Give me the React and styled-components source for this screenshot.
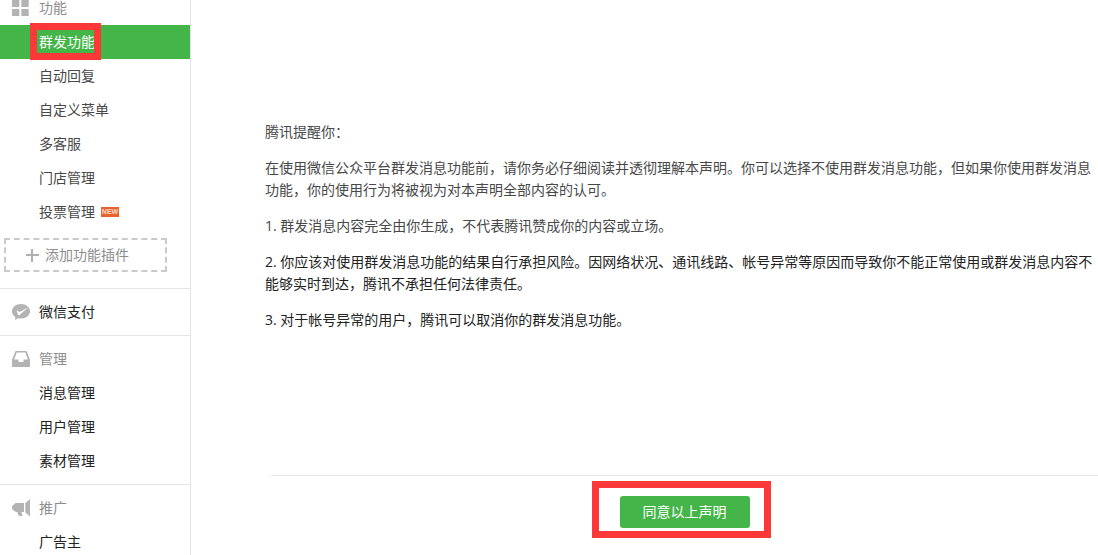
import React from "react";
import styled, { createGlobalStyle } from "styled-components";

const GlobalStyle = createGlobalStyle`
  * { box-sizing: border-box; }
  body {
    margin: 0;
    background: #fff;
    color: #222;
    font-family: "Open Sans", "Noto Sans CJK SC", sans-serif;
    font-size: 14px;
    line-height: 22px;
  }
`;

const Page = styled.div`
  display: flex;
  height: 100vh;
  overflow: hidden;
`;

const Sidebar = styled.nav`
  flex: 0 0 191px;
  border-right: 1px solid #e4e4e6;
`;

const GroupTitle = styled.h2`
  display: flex;
  align-items: center;
  gap: 9px;
  height: 34px;
  margin: 0;
  padding-left: 12px;
  font-size: 14px;
  font-weight: 400;
  color: #8d8d8d;
`;

const Group = styled.section`
  padding: 6px 0;
  & + & { border-top: 1px solid #e4e4e6; }
  &:first-child {
    padding: 0 0 16px;
  }
  &:first-child ${GroupTitle} {
    height: 16px;
    margin-bottom: 9px;
    line-height: 16px;
  }
`;

const TitleLink = styled.a`
  color: #222;
  text-decoration: none;
`;

const IconBox = styled.svg`
  flex: none;
  width: 18px;
  height: 18px;
  fill: #b3b3b3;
`;

const Menu = styled.ul`
  margin: 0;
  padding: 0;
  list-style: none;
`;

const MenuLink = styled.a`
  display: flex;
  align-items: center;
  gap: 6px;
  height: 34px;
  padding-left: 39px;
  text-decoration: none;
  color: ${(p) => (p.$active ? "#fff" : p.$soft ? "#484848" : "#222")};
  background: ${(p) => (p.$active ? "#44b549" : "transparent")};
`;

const Highlight = styled.span`
  position: relative;
  &::after {
    content: "";
    position: absolute;
    inset: ${(p) => p.$inset};
    border: 7px solid #fc3838;
    pointer-events: none;
  }
`;

const NewBadge = styled.span`
  display: flex;
  align-items: center;
  justify-content: center;
  width: 18px;
  height: 10px;
  background: #e8602c;
  color: #fbdccb;
  font: 700 7px/10px "Liberation Sans", sans-serif;
`;

const AddButton = styled.button`
  display: flex;
  align-items: center;
  gap: 6px;
  width: 163px;
  height: 34px;
  margin: 9px 0 0 4px;
  padding: 0 0 0 20px;
  border: 2px dashed #cacaca;
  background: none;
  color: #8d8d8d;
  font: inherit;
`;

const PlusIcon = styled.svg`
  width: 13px;
  height: 13px;
  stroke: #b0b0b0;
  stroke-width: 2;
`;

const Main = styled.main`
  flex: 1;
  min-width: 0;
  padding: 121px 0 0 74px;
`;

const Statement = styled.article`
  display: flex;
  flex-direction: column;
  gap: 14px;
`;

const Paragraph = styled.p`
  margin: 0;
  color: ${(p) => (p.$soft ? "#484848" : "#222")};
`;

const Actions = styled.footer`
  display: flex;
  justify-content: center;
  margin: 144px 0 0 6px;
  padding-top: 20px;
  border-top: 1px solid #e7e7eb;
`;

const AgreeButton = styled.button`
  display: block;
  width: 130px;
  height: 32px;
  padding: 0;
  border: 0;
  border-radius: 3px;
  background: #44b549;
  color: #fff;
  font: inherit;
`;

const icons = {
  grid: <path d="M0 1h7.300v7H0zM9.300 1h7.400v7H9.300zM0 10h7.300v7H0zM9.300 10h7.400v7H9.300z" />,
  pay: (
    <path
      fillRule="evenodd"
      d="M9 1C4 1 0 4.200 0 8.300c0 2.400 1.400 4.500 3.400 5.800L3 17l3.200-1.800c.9.2 1.800.4 2.800.4 5 0 9-3.300 9-7.300S14 1 9 1zM4.500 7.200l3 1.800 9-4.800-9.100 7.800c-.5.4-1 .3-1.300-.2z"
    />
  ),
  inbox: (
    <path
      fillRule="evenodd"
      d="M3.500 1h11L18 9.700V17H0V9.700zM4.700 2.500L2.200 9.500h4.200v1.700c0 .5.300.8.800.8h3.600c.5 0 .8-.3.8-.8V9.500h4.200l-2.500-7z"
    />
  ),
  horn: (
    <path d="M3.500 4H12v9H9.500l1 4H7.300l-1.800-2.500V13H4L1.500 11.500 0 9.800V7.300zM18 0v17.500l-4.700-4.300V4.200z" />
  ),
};

function Icon({ name }) {
  return (
    <IconBox viewBox="0 0 18 18" aria-hidden="true">
      {icons[name]}
    </IconBox>
  );
}

const featureItems = [
  { label: "群发功能", active: true },
  { label: "自动回复" },
  { label: "自定义菜单" },
  { label: "多客服" },
  { label: "门店管理" },
  { label: "投票管理", isNew: true },
];

function MenuList({ items, soft }) {
  return (
    <Menu>
      {items.map(({ label, active, isNew }) => (
        <li key={label}>
          <MenuLink href="#" $active={active} $soft={soft} aria-current={active ? "page" : undefined}>
            {active ? <Highlight $inset="-8px -6px -7px -9px">{label}</Highlight> : label}
            {isNew && <NewBadge>NEW</NewBadge>}
          </MenuLink>
        </li>
      ))}
    </Menu>
  );
}

export default function App() {
  return (
    <>
      <GlobalStyle />
      <Page>
        <Sidebar>
          <Group>
            <GroupTitle><Icon name="grid" />功能</GroupTitle>
            <MenuList items={featureItems} soft />
            <AddButton type="button">
              <PlusIcon viewBox="0 0 13 13" aria-hidden="true">
                <path d="M6 0v13M0 6h13" />
              </PlusIcon>
              添加功能插件
            </AddButton>
          </Group>
          <Group>
            <GroupTitle><Icon name="pay" /><TitleLink href="#">微信支付</TitleLink></GroupTitle>
          </Group>
          <Group>
            <GroupTitle><Icon name="inbox" />管理</GroupTitle>
            <MenuList items={[{ label: "消息管理" }, { label: "用户管理" }, { label: "素材管理" }]} />
          </Group>
          <Group>
            <GroupTitle><Icon name="horn" />推广</GroupTitle>
            <MenuList items={[{ label: "广告主" }]} />
          </Group>
        </Sidebar>
        <Main>
          <Statement>
            <Paragraph $soft>腾讯提醒你：</Paragraph>
            <Paragraph $soft>
              在使用微信公众平台群发消息功能前，请你务必仔细阅读并透彻理解本声明。你可以选择不使用群发消息功能，但如果你使用群发消息功能，你的使用行为将被视为对本声明全部内容的认可。
            </Paragraph>
            <Paragraph $soft>1. 群发消息内容完全由你生成，不代表腾讯赞成你的内容或立场。</Paragraph>
            <Paragraph>
              2. 你应该对使用群发消息功能的结果自行承担风险。因网络状况、通讯线路、帐号异常等原因而导致你不能正常使用或群发消息内容不能够实时到达，腾讯不承担任何法律责任。
            </Paragraph>
            <Paragraph>3. 对于帐号异常的用户，腾讯可以取消你的群发消息功能。</Paragraph>
          </Statement>
          <Actions>
            <Highlight $inset="-15px -21px -10px -28px">
              <AgreeButton type="button">同意以上声明</AgreeButton>
            </Highlight>
          </Actions>
        </Main>
      </Page>
    </>
  );
}
